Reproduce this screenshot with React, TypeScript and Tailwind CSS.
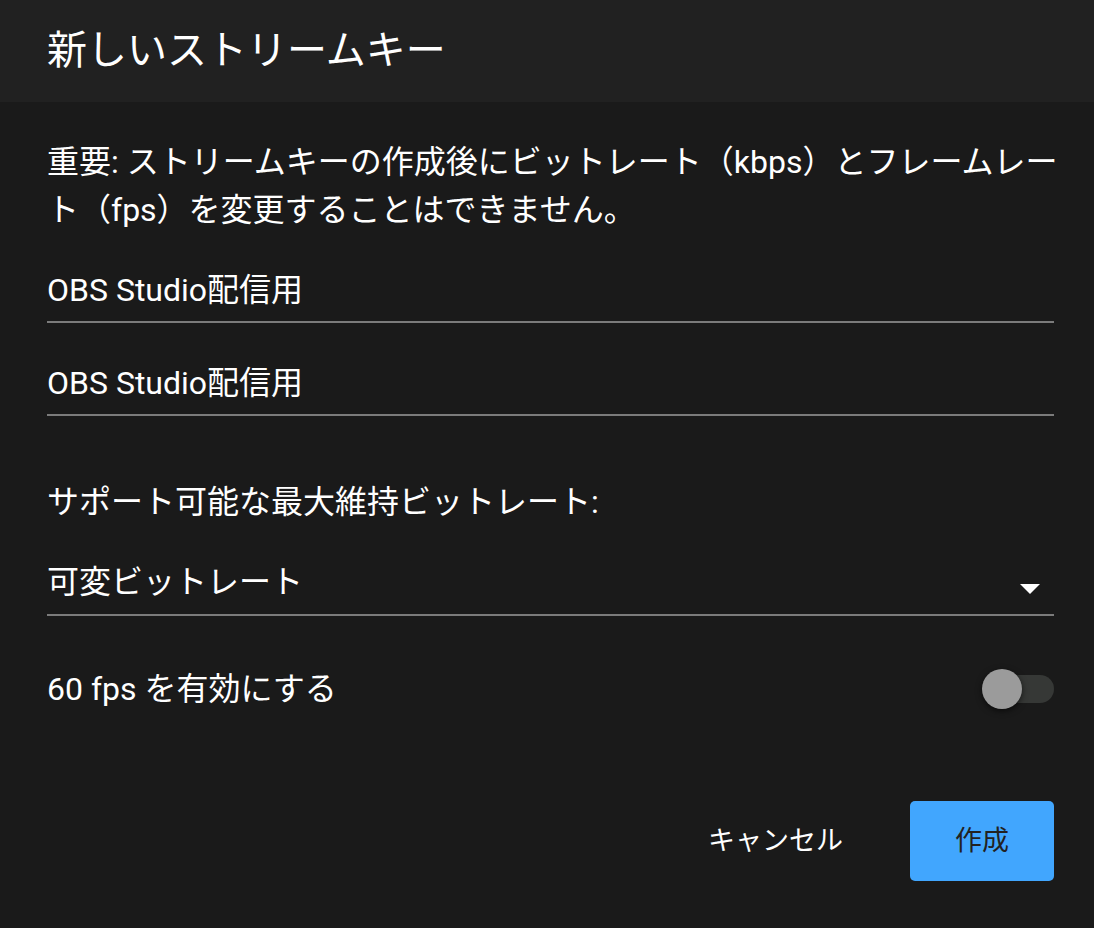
import React, { useState } from 'react';

const FONT = 'font-[Roboto,"Noto_Sans_CJK_JP",sans-serif]';

const TextField: React.FC<{ value: string; className?: string }> = ({ value, className }) => (
    <div className={`border-b-2 border-[#7b7b7b] pb-[7px] ${className ?? ''}`}>
        <div className="text-[32px] leading-[48px] text-white">{value}</div>
    </div>
);

const App: React.FC = () => {
    const [fps60, setFps60] = useState(false);

    return (
        <div className={`w-[1094px] h-[928px] bg-[#1a1a1a] flex flex-col ${FONT}`}>
            {/* タイトル */}
            <div className="h-[102px] bg-[#212121] flex items-center pl-[47px]">
                <h1 className="text-[40px] leading-[48px] text-white font-normal">新しいストリームキー</h1>
            </div>

            <div className="pl-[47px] pr-[40px] pt-[36px] flex flex-col">
                <p className="text-[32px] leading-[48px] text-white whitespace-nowrap">
                    <span className="block">重要: ストリームキーの作成後にビットレート（kbps）とフレームレー</span>
                    <span className="block">ト（fps）を変更することはできません。</span>
                </p>

                <TextField value="OBS Studio配信用" className="mt-[32px]" />
                <TextField value="OBS Studio配信用" className="mt-[36px]" />

                <div className="mt-[62px] text-[32px] leading-[48px] text-white">
                    サポート可能な最大維持ビットレート:
                </div>

                {/* セレクト */}
                <div className="mt-[32px] border-b-2 border-[#7b7b7b] pb-[8px] flex items-center justify-between">
                    <span className="text-[32px] leading-[48px] text-white">可変ビットレート</span>
                    <svg width="20" height="10" viewBox="0 0 20 10" className="mr-[14px] mt-[14px]">
                        <path d="M0 0 L20 0 L10 10 Z" fill="#ffffff" />
                    </svg>
                </div>

                {/* 60fps スイッチ */}
                <div className="mt-[49px] flex items-center justify-between h-[48px]">
                    <span className="text-[32px] leading-[48px] text-white">60 fps を有効にする</span>
                    <button
                        onClick={() => setFps60(!fps60)}
                        className="relative w-[72px] h-[40px]"
                    >
                        <span className="absolute left-[4px] right-0 top-[6px] h-[28px] rounded-full bg-[#363836]" />
                        <span className="absolute left-0 top-0 w-[40px] h-[40px] rounded-full bg-[#9b9b9b] shadow-[0_2px_6px_rgba(0,0,0,0.6)]" />
                    </button>
                </div>

                {/* アクション */}
                <div className="mt-[88px] flex justify-end items-center gap-[51px]">
                    <button className="px-4 h-[80px] text-[27px] text-white">キャンセル</button>
                    <button className="w-[144px] h-[80px] rounded-[5px] bg-[#41a6fe] text-[27px] text-[#222]">
                        作成
                    </button>
                </div>
            </div>
        </div>
    );
};

export default App;
